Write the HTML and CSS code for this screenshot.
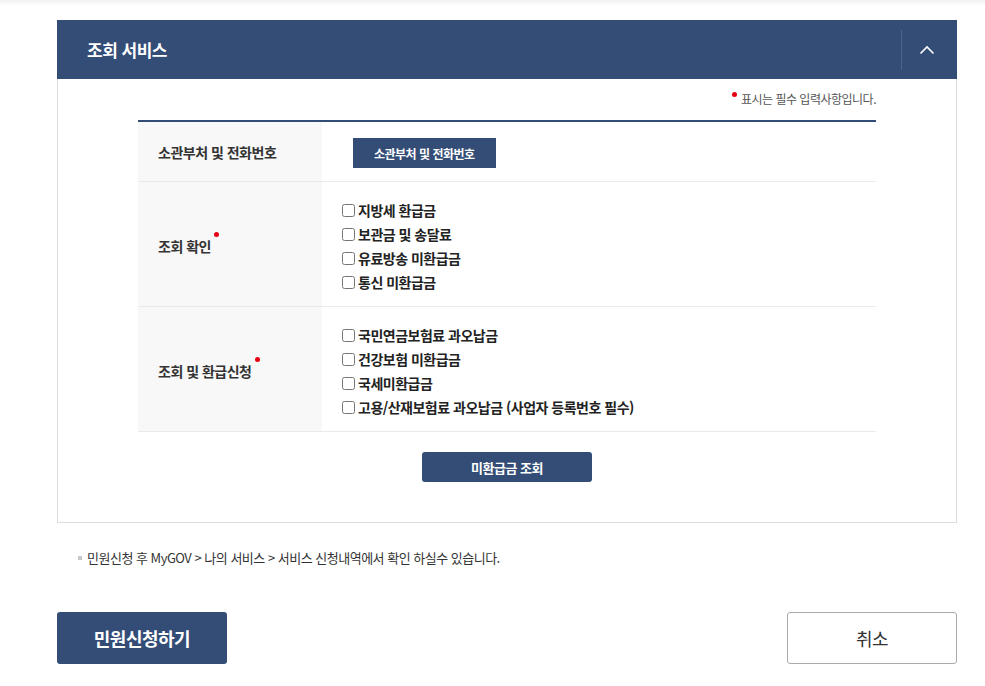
FILE: index.html
```html
<!DOCTYPE html>
<html lang="ko">
<head>
    <meta charset="UTF-8">
    <meta name="viewport" content="width=device-width, initial-scale=1.0">
    <title>조회 서비스</title>
    <link rel="stylesheet" href="styles.css">
</head>
<body>

<div class="top-shade"></div>

<div class="wrap">
    <!-- 조회 서비스 패널 -->
    <div class="panel">
        <div class="panel-head">
            <h2>조회 서비스</h2>
            <button class="toggle" type="button" aria-label="접기">
                <svg width="16" height="10" viewBox="0 0 16 10"><polyline points="1.5,8.5 8,2 14.5,8.5" fill="none" stroke="#fff" stroke-width="1.6"/></svg>
            </button>
        </div>

        <div class="panel-body">
            <p class="req-note"><span class="dot"></span>표시는 필수 입력사항입니다.</p>

            <table class="form-table">
                <tr>
                    <th>소관부처 및 전화번호</th>
                    <td><button class="btn-small" type="button">소관부처 및 전화번호</button></td>
                </tr>
                <tr>
                    <th>조회 확인<span class="dot label-dot"></span></th>
                    <td class="checks">
                        <label><input type="checkbox">지방세 환급금</label>
                        <label><input type="checkbox">보관금 및 송달료</label>
                        <label><input type="checkbox">유료방송 미환급금</label>
                        <label><input type="checkbox">통신 미환급금</label>
                    </td>
                </tr>
                <tr>
                    <th>조회 및 환급신청<span class="dot label-dot"></span></th>
                    <td class="checks">
                        <label><input type="checkbox">국민연금보험료 과오납금</label>
                        <label><input type="checkbox">건강보험 미환급금</label>
                        <label><input type="checkbox">국세미환급금</label>
                        <label><input type="checkbox">고용/산재보험료 과오납금 (사업자 등록번호 필수)</label>
                    </td>
                </tr>
            </table>

            <div class="center">
                <button class="btn-search" type="button">미환급금 조회</button>
            </div>
        </div>
    </div>

    <p class="info">민원신청 후 MyGOV &gt; 나의 서비스 &gt; 서비스 신청내역에서 확인 하실수 있습니다.</p>

    <div class="actions">
        <button class="btn-apply" type="button">민원신청하기</button>
        <button class="btn-cancel" type="button">취소</button>
    </div>
</div>

</body>
</html>
```

FILE: styles.css
```css
body {
    margin: 0;
    padding: 0;
    font-family: "Noto Sans CJK KR", "Noto Sans", sans-serif;
    color: #333;
    background-color: #fff;
    letter-spacing: -0.5px;
}

.top-shade {
    height: 6px;
    background: linear-gradient(#f1f1f1, #fff);
}

.wrap {
    width: 900px;
    margin: 14px 0 0 57px;
}

.panel-head {
    display: flex;
    align-items: center;
    justify-content: space-between;
    height: 59px;
    background-color: #334d77;
}

.panel-head h2 {
    margin: 0;
    padding-left: 30px;
    font-size: 17px;
    font-weight: 700;
    color: #fff;
}

.toggle {
    display: flex;
    align-items: center;
    justify-content: center;
    width: 56px;
    height: 40px;
    padding: 0 5px 0 0;
    border: none;
    border-left: 1px solid #4a6189;
    background: none;
}

.panel-body {
    border: 1px solid #ddd;
    border-top: none;
    padding: 10px 80px 40px;
}

.req-note {
    margin: 0 0 11px;
    font-size: 12px;
    line-height: 20px;
    color: #555;
    text-align: right;
}

.dot {
    display: inline-block;
    width: 5px;
    height: 5px;
    border-radius: 50%;
    background-color: #e60012;
    margin-right: 4px;
    vertical-align: 7px;
}

.label-dot {
    margin: 0 0 0 3px;
    vertical-align: 15px;
}

.form-table {
    width: 100%;
    border-collapse: collapse;
    border-top: 2px solid #334d77;
}

.form-table tr {
    border-bottom: 1px solid #eaeaea;
}

.form-table th {
    width: 164px;
    padding: 0 0 0 20px;
    background-color: #f8f8f8;
    font-size: 14px;
    font-weight: 700;
    color: #333;
    text-align: left;
}

.form-table td {
    padding: 16px 20px 13px;
}

.form-table td.checks {
    padding: 16px 20px 12px;
}

.checks label {
    display: flex;
    align-items: center;
    height: 24px;
    font-size: 14px;
    font-weight: 700;
    color: #222;
}

.checks input {
    width: 13px;
    height: 13px;
    margin: 0 3px 0 0;
}

.btn-small {
    height: 30px;
    padding: 0 21px;
    margin-left: 11px;
    border: none;
    background-color: #334d77;
    color: #fff;
    font-family: inherit;
    font-size: 12px;
    font-weight: 700;
    letter-spacing: -0.5px;
}

.center {
    margin-top: 20px;
    text-align: center;
}

.btn-search {
    width: 170px;
    height: 30px;
    border: none;
    border-radius: 3px;
    background-color: #334d77;
    color: #fff;
    font-family: inherit;
    font-size: 13px;
    font-weight: 700;
    letter-spacing: -0.5px;
}

.info {
    position: relative;
    margin: 25px 0 0;
    padding-left: 30px;
    font-size: 13px;
    line-height: 20px;
    color: #333;
}

.info::before {
    content: "";
    position: absolute;
    left: 21px;
    top: 8px;
    width: 4px;
    height: 4px;
    background-color: #c8c8c8;
}

.actions {
    display: flex;
    justify-content: space-between;
    margin-top: 44px;
}

.actions button {
    width: 170px;
    height: 52px;
    border-radius: 3px;
    font-family: inherit;
    font-size: 18px;
    letter-spacing: -0.5px;
}

.btn-apply {
    border: none;
    background-color: #334d77;
    color: #fff;
    font-weight: 700;
}

.btn-cancel {
    border: 1px solid #aaa;
    background-color: #fff;
    color: #333;
}
```
